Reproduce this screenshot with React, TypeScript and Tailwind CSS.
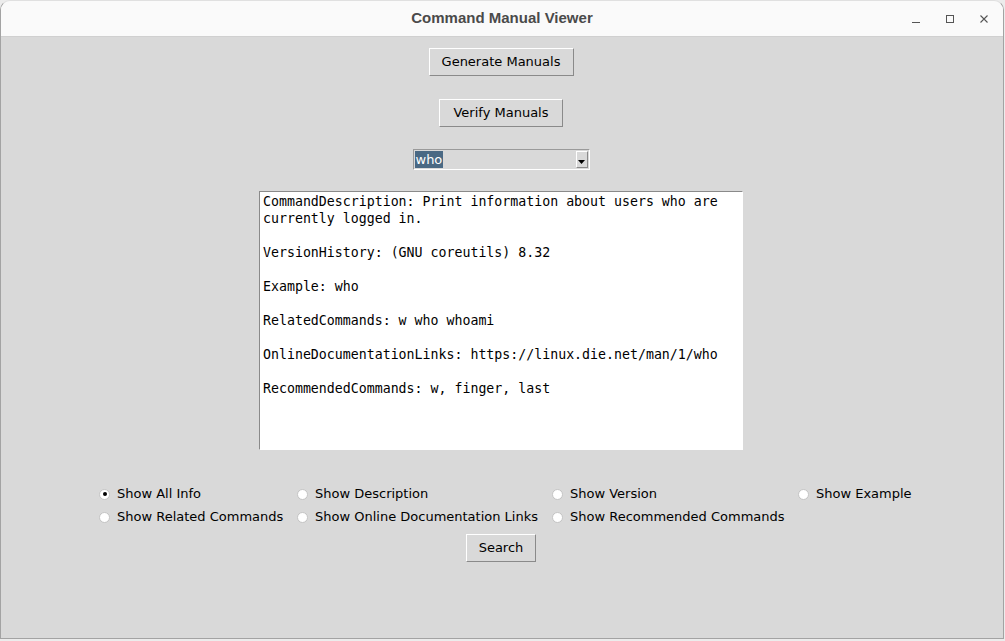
import React, { useState } from "react";

const manual = `CommandDescription: Print information about users who are
currently logged in.

VersionHistory: (GNU coreutils) 8.32

Example: who

RelatedCommands: w who whoami

OnlineDocumentationLinks: https://linux.die.net/man/1/who

RecommendedCommands: w, finger, last`;

const options = [
  { id: "all", label: "Show All Info" },
  { id: "desc", label: "Show Description" },
  { id: "version", label: "Show Version" },
  { id: "example", label: "Show Example" },
  { id: "related", label: "Show Related Commands" },
  { id: "links", label: "Show Online Documentation Links" },
  { id: "recommended", label: "Show Recommended Commands" },
];

const TkButton = ({ label, className = "" }: { label: string; className?: string }) => (
  <button
    className={`h-[28px] border border-t-white border-l-white border-b-[#8a8a8a] border-r-[#8a8a8a] bg-[#d9d9d9] text-[13px] text-black ${className}`}
  >
    {label}
  </button>
);

const Radio = ({ checked }: { checked: boolean }) => (
  <span className="flex h-[11px] w-[11px] items-center justify-center rounded-full border border-[#c4c4c4] bg-white">
    {checked && <span className="h-[4px] w-[4px] rounded-full bg-black" />}
  </span>
);

export default function App() {
  const [selected, setSelected] = useState("all");

  return (
    <div className="h-[641px] w-[1005px] overflow-hidden bg-[#ececec] font-['DejaVu_Sans',sans-serif]">
      <div className="flex h-[639px] w-[1004px] flex-col overflow-hidden rounded-t-[10px] border border-[#a3a3a3] border-t-[#e0e0e0]">
        {/* title bar */}
        <div className="flex h-[36px] shrink-0 items-center border-b border-[#d0d0d0] bg-[#fafafa]">
          <div className="w-[120px]" />
          <div className="flex-1 text-center font-['Liberation_Sans',sans-serif] text-[15px] font-bold text-[#4a4a4a]">
            Command Manual Viewer
          </div>
          <div className="flex w-[120px] items-center justify-end gap-[22px] pr-[13px]">
            <svg width="12" height="12" viewBox="0 0 12 12">
              <path d="M2 9.5h8" stroke="#555" strokeWidth="1" />
            </svg>
            <svg width="12" height="12" viewBox="0 0 12 12">
              <rect x="2.5" y="2.5" width="7" height="7" fill="none" stroke="#555" strokeWidth="1" />
            </svg>
            <svg width="12" height="12" viewBox="0 0 12 12">
              <path d="M2.5 2.5l7 7M9.5 2.5l-7 7" stroke="#555" strokeWidth="1.1" />
            </svg>
          </div>
        </div>

        {/* body */}
        <div className="flex flex-1 flex-col items-center bg-[#d9d9d9] pr-[2px]">
          <TkButton label="Generate Manuals" className="mt-[11px] w-[145px]" />
          <TkButton label="Verify Manuals" className="mt-[23px] w-[124px]" />

          <div className="mt-[22px] flex h-[21px] w-[177px] items-center border border-t-[#9a9a9a] border-l-[#9a9a9a] border-b-white border-r-white bg-[#d9d9d9] pl-[1px]">
            <span className="bg-[#4a6984] px-[1px] text-[13px] leading-[17px] text-white">who</span>
            <span className="flex-1" />
            <span className="mr-[1px] flex h-[17px] w-[12px] items-end justify-center border border-t-white border-l-white border-b-[#8a8a8a] border-r-[#8a8a8a] pb-[3px]">
              <svg width="7" height="4" viewBox="0 0 7 4">
                <path d="M0 0h7L3.5 4z" fill="#000" />
              </svg>
            </span>
          </div>

          <div className="mt-[21px] h-[259px] w-[484px] border border-t-[#8a8a8a] border-l-[#8a8a8a] border-b-white border-r-white bg-white py-[1px] pl-[3px]">
            <pre className="whitespace-pre-wrap font-['DejaVu_Sans_Mono',monospace] text-[13.25px] leading-[17px] text-black">
              {manual}
            </pre>
          </div>

          <div className="mt-[34px] ml-[9px] grid grid-cols-[198px_255px_246px_116px] gap-y-[3px]">
            {options.map((o) => (
              <label
                key={o.id}
                onClick={() => setSelected(o.id)}
                className="flex h-[20px] items-center gap-[7px] pl-[1px] text-[13px] text-black"
              >
                <Radio checked={selected === o.id} />
                <span>{o.label}</span>
              </label>
            ))}
          </div>

          <TkButton label="Search" className="mt-[7px] w-[70px]" />
        </div>
      </div>
    </div>
  );
}
